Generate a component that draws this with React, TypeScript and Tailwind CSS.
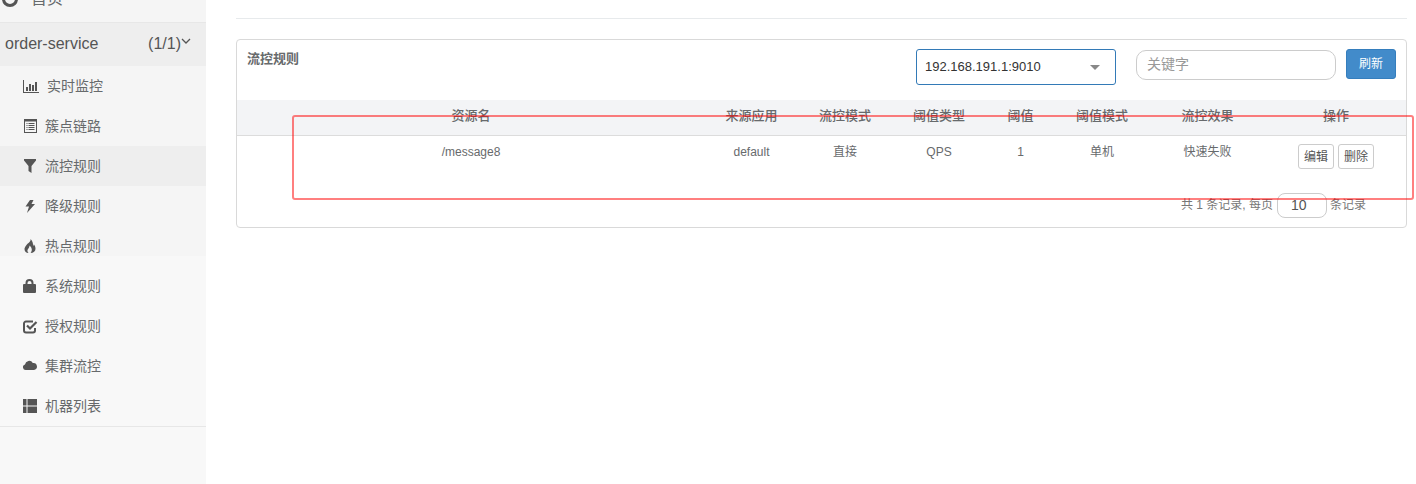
import React from "react";

const cjk = "font-['Liberation_Sans','Noto_Sans_CJK_SC',sans-serif]";

const ChartIcon = () => (
  <svg width="16" height="13" viewBox="0 0 16 13" fill="#555">
    <path d="M0 0h1v12h15v1H0z" />
    <path d="M3 7h2v4H3zM6 4h2v7H6zM9 5h2v6H9zM12 2h2v9h-2z" />
  </svg>
);
const ListIcon = () => (
  <svg width="13" height="14" viewBox="0 0 13 14" fill="#555" className="ml-[1px]">
    <path fillRule="evenodd" d="M0 0h13v14H0zM1 2.500v10.500h11V2.500z" />
    <path d="M2.500 4h1v1h-1zM4.500 4h6v1h-6zM2.500 6h1v1h-1zM4.500 6h6v1h-6zM2.500 8h1v1h-1zM4.500 8h6v1h-6zM2.500 10h1v1h-1zM4.500 10h6v1h-6z" />
  </svg>
);
const FilterIcon = () => (
  <svg width="12" height="14" viewBox="0 0 12 14" fill="#555" className="ml-[1px]">
    <path d="M0 0h12v1.500L7.500 7v7L4.500 12V7L0 1.500z" />
  </svg>
);
const BoltIcon = () => (
  <svg width="10" height="13" viewBox="0 0 10 13" fill="#555" className="ml-[2px]">
    <path d="M5 0h3.500L6.500 4H10L2 13l2-6.500H0.500z" />
  </svg>
);
const FireIcon = () => (
  <svg width="12" height="14" viewBox="0 0 12 14" fill="#555" className="ml-[1px]">
    <path d="M6.500 0C7.200 2.500 4 4 2.500 6 1 8 .5 9 .5 10.200.5 12.300 2.300 14 4.500 14 3 12.500 3.200 11 4.200 9.800 5.200 8.500 5.500 7.500 5.500 6.500 7 7.800 7.800 9.300 7.800 10.700 7.800 12 7.200 13.200 6.500 14 9.500 14 11.500 12.300 11.500 9.800 11.500 8 10.800 6.500 9.800 5.200 9.800 6 9.500 6.700 9 7 9.300 4.500 8.500 1.500 6.500 0z" />
  </svg>
);
const LockIcon = () => (
  <svg width="13" height="14" viewBox="0 0 13 14" fill="#555">
    <path fillRule="evenodd" d="M2.500 5V4a4 4 0 0 1 8 0v1H12a1 1 0 0 1 1 1v7a1 1 0 0 1-1 1H1a1 1 0 0 1-1-1V6a1 1 0 0 1 1-1zM4.500 5h4V4a2 2 0 0 0-4 0z" />
  </svg>
);
const CheckIcon = () => (
  <svg width="15" height="15" viewBox="0 0 15 15" fill="none" stroke="#555">
    <path d="M12 9v2.500a2 2 0 0 1-2 2H3a2 2 0 0 1-2-2v-7a2 2 0 0 1 2-2h7" strokeWidth="2" />
    <path d="M4 6.500l3 3L13.500 3" strokeWidth="2.200" />
  </svg>
);
const CloudIcon = () => (
  <svg width="14" height="10" viewBox="0 0 14 10" fill="#555" className="mb-[3px]">
    <path d="M2.800 10A2.800 2.800 0 0 1 2 4.500 4.200 4.200 0 0 1 9.800 3 3.500 3.500 0 0 1 11 10z" />
  </svg>
);
const GridIcon = () => (
  <svg width="14" height="14" viewBox="0 0 14 14" fill="#555">
    <path d="M0 0h3.500v6.500H0zM0 7.500h3.500V14H0zM4.500 0H14v6.500H4.500zM4.500 7.500H14V14H4.500z" />
  </svg>
);

const items: { label: string; icon: React.ReactNode; wide?: boolean; active?: boolean }[] = [
  { label: "实时监控", icon: <ChartIcon />, wide: true },
  { label: "簇点链路", icon: <ListIcon /> },
  { label: "流控规则", icon: <FilterIcon />, active: true },
  { label: "降级规则", icon: <BoltIcon /> },
  { label: "热点规则", icon: <FireIcon /> },
  { label: "系统规则", icon: <LockIcon /> },
  { label: "授权规则", icon: <CheckIcon /> },
  { label: "集群流控", icon: <CloudIcon /> },
  { label: "机器列表", icon: <GridIcon /> },
];

const cols = "grid grid-cols-[468px_93px_94px_94px_69px_94px_117px_140px]";
const headers = ["资源名", "来源应用", "流控模式", "阈值类型", "阈值", "阈值模式", "流控效果", "操作"];
const row = ["/message8", "default", "直接", "QPS", "1", "单机", "快速失败"];

function Item({ label, icon, wide, active }: { label: string; icon: React.ReactNode; wide?: boolean; active?: boolean }) {
  return (
    <div className={`h-[40px] flex items-center pl-[23px] text-[14px] text-[#676a6c] ${active ? "bg-[#eeeeee]" : ""}`}>
      <span className={`${wide ? "w-[24px]" : "w-[22px]"} flex justify-start shrink-0`}>{icon}</span>
      <span>{label}</span>
    </div>
  );
}

export default function App() {
  return (
    <div className={`relative w-[1416px] h-[484px] overflow-hidden bg-white flex ${cjk} text-[#676a6c]`}>
      <aside className="w-[206px] h-full shrink-0 bg-[linear-gradient(#f5f5f5_256px,#f8f8f8_256px)] flex flex-col">
        <div className="h-[23px] overflow-hidden border-b border-[#e7e7e7]">
          <div className="flex items-center gap-[13px] pl-[2px] h-[20px] -mt-[11px]">
            <span className="w-[16px] h-[16px] rounded-full border-[3px] border-[#555] block -mt-[1px]" />
            <span className="text-[16px] leading-[20px]">首页</span>
          </div>
        </div>
        <div className="h-[43px] bg-[#eeeeee] flex items-center pl-[5px] pr-[15px] pb-[2px] text-[16px] text-[#555]">
          <span className="flex-1">order-service</span>
          <span>(1/1)</span>
          <svg width="10" height="6" viewBox="0 0 10 6" className="mb-[5px]" fill="none" stroke="#555" strokeWidth="1.300">
            <path d="M1 1l4 4 4-4" />
          </svg>
        </div>
        <div className="border-b border-[#e7e7e7]">
          {items.map((it) => (
            <Item key={it.label} {...it} />
          ))}
        </div>
      </aside>

      <main className="flex-1 pl-[30px] pr-[9px]">
        <div className="h-[19px] border-b border-[#e7eaec]" />
        <section className="mt-[20px] h-[189px] border border-[#d9d9d9] rounded-[4px] bg-white">
          <div className="h-[60px] flex items-start pl-[10px] pr-[10px] pt-[9px]">
            <h3 className="flex-1 text-[13px] font-bold leading-[20px]">流控规则</h3>
            <div className="w-[200px] h-[36px] border border-[#337ab7] rounded-[3px] flex items-center pl-[8px] pr-[15px] text-[13px] text-[#333] mr-[20px]">
              <span className="flex-1">192.168.191.1:9010</span>
              <span className="w-0 h-0 border-x-[5px] border-x-transparent border-t-[5px] border-t-[#888]" />
            </div>
            <input
              readOnly
              placeholder="关键字"
              className="w-[200px] h-[30px] mt-[1px] border border-[#cccccc] rounded-[10px] px-[10px] pb-[2px] text-[14px] placeholder:text-[#999] outline-none"
            />
            <button className="ml-[10px] w-[50px] h-[30px] bg-[#428bca] border border-[#357ebd] rounded-[3px] text-white text-[12px]">
              刷新
            </button>
          </div>
          <div className={`${cols} h-[36px] bg-[#f3f4f6] border-b border-[#dcdcdc] text-[13px] font-medium text-center leading-[32px]`}>
            {headers.map((h) => (
              <div key={h}>{h}</div>
            ))}
          </div>
          <div className={`${cols} h-[58px] text-[12px] text-center pt-[8px]`}>
            {row.map((c) => (
              <div key={c} className="leading-[16px]">{c}</div>
            ))}
            <div className="flex justify-center gap-[4px]">
              <button className="w-[36px] h-[25px] border border-[#cccccc] rounded-[3px] text-[12px] text-[#555]">编辑</button>
              <button className="w-[36px] h-[25px] border border-[#cccccc] rounded-[3px] text-[12px] text-[#555]">删除</button>
            </div>
          </div>
          <div className="flex items-center justify-end pr-[40px] text-[12px] text-[#777] h-[24px] -mt-[1px]">
            <span className="mr-[4px]">共 1 条记录, 每页</span>
            <span className="w-[50px] h-[25px] mr-[3px] border border-[#cccccc] rounded-[8px] text-[14px] text-[#555] flex items-center pl-[13px]">10</span>
            <span>条记录</span>
          </div>
        </section>
      </main>

      <div className="absolute left-[292px] top-[115px] w-[1122px] h-[85px] border-2 border-[#ff0000]/50 rounded-[3px] pointer-events-none" />
    </div>
  );
}
